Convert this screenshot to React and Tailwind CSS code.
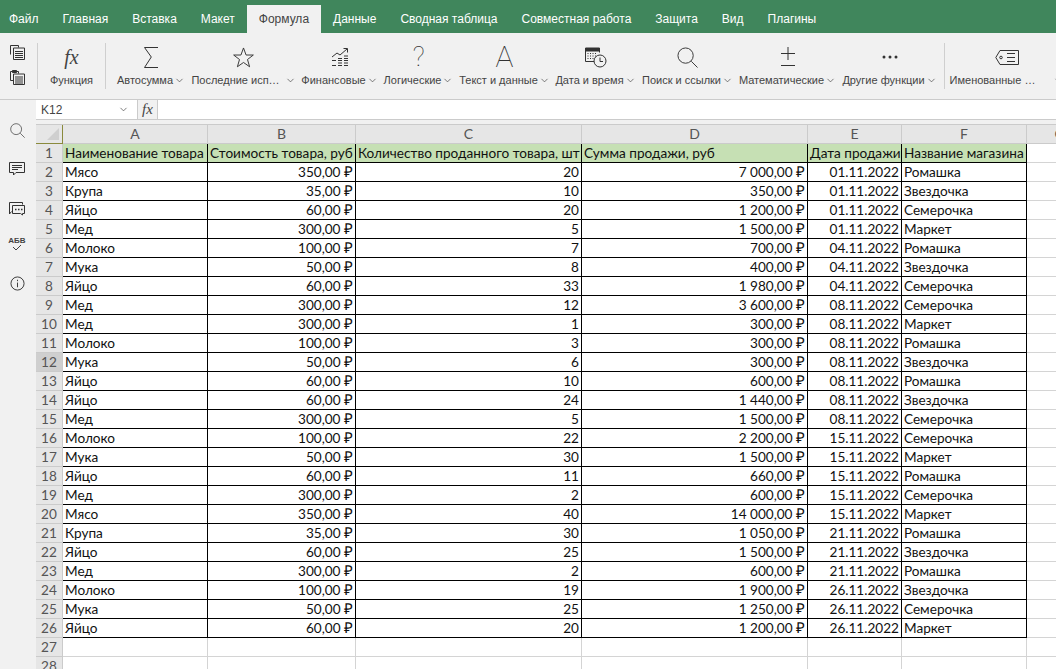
import { ChevronDown } from "lucide-react";

const tabs = ["Файл", "Главная", "Вставка", "Макет", "Формула", "Данные", "Сводная таблица", "Совместная работа", "Защита", "Вид", "Плагины"];

const rows = [
    ["Мясо", "350,00", 20, "7 000,00", "01.11.2022", "Ромашка"],
    ["Крупа", "35,00", 10, "350,00", "01.11.2022", "Звездочка"],
    ["Яйцо", "60,00", 20, "1 200,00", "01.11.2022", "Семерочка"],
    ["Мед", "300,00", 5, "1 500,00", "01.11.2022", "Маркет"],
    ["Молоко", "100,00", 7, "700,00", "04.11.2022", "Ромашка"],
    ["Мука", "50,00", 8, "400,00", "04.11.2022", "Звездочка"],
    ["Яйцо", "60,00", 33, "1 980,00", "04.11.2022", "Семерочка"],
    ["Мед", "300,00", 12, "3 600,00", "08.11.2022", "Семерочка"],
    ["Мед", "300,00", 1, "300,00", "08.11.2022", "Маркет"],
    ["Молоко", "100,00", 3, "300,00", "08.11.2022", "Ромашка"],
    ["Мука", "50,00", 6, "300,00", "08.11.2022", "Звездочка"],
    ["Яйцо", "60,00", 10, "600,00", "08.11.2022", "Ромашка"],
    ["Яйцо", "60,00", 24, "1 440,00", "08.11.2022", "Звездочка"],
    ["Мед", "300,00", 5, "1 500,00", "08.11.2022", "Семерочка"],
    ["Молоко", "100,00", 22, "2 200,00", "15.11.2022", "Семерочка"],
    ["Мука", "50,00", 30, "1 500,00", "15.11.2022", "Маркет"],
    ["Яйцо", "60,00", 11, "660,00", "15.11.2022", "Ромашка"],
    ["Мед", "300,00", 2, "600,00", "15.11.2022", "Семерочка"],
    ["Мясо", "350,00", 40, "14 000,00", "15.11.2022", "Маркет"],
    ["Крупа", "35,00", 30, "1 050,00", "21.11.2022", "Ромашка"],
    ["Яйцо", "60,00", 25, "1 500,00", "21.11.2022", "Звездочка"],
    ["Мед", "300,00", 2, "600,00", "21.11.2022", "Ромашка"],
    ["Молоко", "100,00", 19, "1 900,00", "26.11.2022", "Звездочка"],
    ["Мука", "50,00", 25, "1 250,00", "26.11.2022", "Семерочка"],
    ["Яйцо", "60,00", 20, "1 200,00", "26.11.2022", "Маркет"]
];

const ink = { fill: "none", stroke: "#333", strokeWidth: 1 };

function CopyIcon() {
    return (
        <svg width="15" height="15" viewBox="0 0 15 15" {...ink}>
            <path d="M.5 9.500v-9h8v2" />
            <path d="M3.500 3h11v11.500h-11z" fill="#f1f1f1" />
            <path d="M5 6.500h8M5 8.500h8M5 10.500h8M5 12.500h8" />
        </svg>
    );
}

function PasteIcon() {
    return (
        <svg width="15" height="15" viewBox="0 0 15 15" {...ink}>
            <path d="M3 1.500H.5v9H3M6 1.500h2.500v2" />
            <path d="M2.500.5h4v2h-4z" fill="#333" />
            <path d="M3.500 4h11v10.500h-11z" fill="#f1f1f1" />
            <path d="M5 7h8M5 9h8M5 11h8M5 13h8" />
        </svg>
    );
}

function SumIcon() {
    return (
        <svg width="16" height="21" viewBox="0 0 16 21" {...ink}>
            <path d="M15 .5H1.500l6.800 9.500-6.800 10.500H15" />
        </svg>
    );
}

function StarIcon() {
    return (
        <svg width="21" height="21" viewBox="0 0 22 22" {...ink}>
            <path d="M11 1l2.700 7.400h7.600l-6.100 4.700 2.200 7.600L11 16.200l-6.400 4.500 2.200-7.600L.7 8.400h7.600z" />
        </svg>
    );
}

function FinanceIcon() {
    return (
        <svg width="18" height="20" viewBox="0 0 18 20" {...ink}>
            <path d="M1 10l5-4 3 2 7-6M12.500 1.500h4v4" />
            <path d="M1 13.500h4M1 18.500h4M7 11.500h4M7 13.500h4M7 16h4M7 18.500h4M13 9h4M13 11.500h4M13 13.500h4M13 16h4M13 18.500h4" />
        </svg>
    );
}

function CalendarIcon() {
    return (
        <svg width="22" height="21" viewBox="0 0 22 21" {...ink}>
            <path d="M10 14.500H.5v-12h14v3" />
            <path d="M.5 1h14v3H.5z" fill="#333" />
            <path d="M2.500 6.500h1M5 6.500h1M7.500 6.500h1M10 6.500h1M2.500 9h1M5 9h1M7.500 9h1M10 9h1M2.500 11.500h1M5 11.500h1M7.500 11.500h1" />
            <circle cx="15" cy="14" r="6" fill="#f1f1f1" />
            <path d="M15 10.500v4h3" />
        </svg>
    );
}

function SearchIcon({ size = 21 }) {
    return (
        <svg width={size} height={size} viewBox="0 0 22 22" {...ink}>
            <circle cx="9" cy="9" r="8" />
            <path d="M15 15l6.500 6.500" />
        </svg>
    );
}

function PlusMinusIcon() {
    return (
        <svg width="14" height="20" viewBox="0 0 14 20" {...ink}>
            <path d="M7 0v13M0 6.500h14M0 18.500h14" />
        </svg>
    );
}

function DotsIcon() {
    return (
        <svg width="16" height="4" viewBox="0 0 16 4" fill="#333">
            <circle cx="2" cy="2" r="1.500" />
            <circle cx="8" cy="2" r="1.500" />
            <circle cx="14" cy="2" r="1.500" />
        </svg>
    );
}

function TagIcon() {
    return (
        <svg width="24" height="15" viewBox="0 0 24 15" {...ink}>
            <path d="M5 .5h18.500v14H5L.8 7.500z" />
            <circle cx="6" cy="7.500" r="1.300" />
            <path d="M12 3.500h8M12 7.500h8M12 11.500h8" />
        </svg>
    );
}

function CommentIcon() {
    return (
        <svg width="16" height="16" viewBox="0 0 16 16" {...ink}>
            <path d="M.5 1.500h15v10H7l-2.500 2.500v-2.500h-4z" />
            <path d="M3 4.500h10M3 6.500h10M3 8.500h6" />
        </svg>
    );
}

function ChatIcon() {
    return (
        <svg width="16" height="15" viewBox="0 0 16 15" {...ink}>
            <path d="M2.500 10.500l-2 2.500V1.500h13v2" />
            <path d="M3.500 4.500h12v8h-2v1.500l-2-1.500h-8z" fill="#f1f1f1" />
            <path d="M6 8.500h1.500M9 8.500h1.500M12 8.500h1.500" strokeWidth="1.500" />
        </svg>
    );
}

function InfoIcon() {
    return (
        <svg width="15" height="15" viewBox="0 0 16 16" {...ink}>
            <circle cx="8" cy="8" r="7" />
            <path d="M8 7v5M8 4v1.500" />
        </svg>
    );
}

function FxIcon({ small }) {
    return (
        <span className={`font-['Liberation_Serif',serif] italic text-[#444] leading-none ${small ? "text-[15px]" : "text-[20px]"}`}>
            fx
        </span>
    );
}

function ToolItem({ icon, label, className, chevronGap = "ml-px" }) {
    return (
        <div className={`flex flex-col items-center h-full ${className}`}>
            <div className="h-[30px] flex items-center justify-center">{icon}</div>
            <div className="flex items-center mt-[2px] h-[13px] text-[11px] text-[#444] whitespace-nowrap">
                <span>{label}</span>
                <ChevronDown size={11} strokeWidth={1.500} className={chevronGap} />
            </div>
        </div>
    );
}

function Separator() {
    return <div className="w-px h-[46px] bg-[#cfcfcf] shrink-0" />;
}

function Ruble({ value }) {
    return (
        <span>
            {value} <span className="font-['Liberation_Sans',sans-serif] text-[15px] leading-none">₽</span>
        </span>
    );
}

function Cell({ className, children }) {
    return (
        <div className={`h-[19px] pl-[2px] pr-[2px] leading-[18px] whitespace-nowrap overflow-hidden shrink-0 border-r border-b border-black ${className}`}>
            {children}
        </div>
    );
}

function RowHeader({ n, active }) {
    return (
        <div className={`w-[27px] h-[19px] shrink-0 text-center leading-[18px] text-[#555] border-r border-b border-[#cbcbcb] ${active ? "bg-[#cfcfcf]" : "bg-[#e6e6e6]"}`}>
            {n}
        </div>
    );
}

function ColHeader({ className, children }) {
    return (
        <div className={`h-[19px] shrink-0 text-center leading-[18px] text-[#555] bg-[#e6e6e6] border-r border-b border-[#cbcbcb] ${className}`}>
            {children}
        </div>
    );
}

function EmptyRow({ n }) {
    const cols = ["w-[145px]", "w-[148px]", "w-[226px]", "w-[226px]", "w-[94px]", "w-[125px]", "w-[66px]"];
    return (
        <div className="flex">
            <RowHeader n={n} />
            {cols.map((c, i) => (
                <div key={i} className={`h-[19px] shrink-0 border-r border-b border-[#d4d4d4] ${c}`} />
            ))}
        </div>
    );
}

export default function App() {
    return (
        <div className="w-[1056px] h-[669px] overflow-hidden bg-white font-['Liberation_Sans',sans-serif] flex flex-col">
            <div className="h-[33px] bg-[#40865c] flex items-end shrink-0">
                {tabs.map((t, i) => (
                    <div
                        key={t}
                        className={`h-[28px] flex items-center text-[12px] whitespace-nowrap ${i === 0 ? "pl-[9px] pr-3" : "px-3"} ${t === "Формула" ? "bg-[#f1f1f1] text-[#444]" : "text-white"}`}>
                        {t}
                    </div>
                ))}
            </div>

            <div className="h-[67px] bg-[#f1f1f1] border-b border-[#cbcbcb] shrink-0 flex items-center">
                <div className="w-[37px] h-full flex flex-col items-center justify-center gap-[10px] shrink-0 pb-[2px] pr-[3px]">
                    <CopyIcon />
                    <PasteIcon />
                </div>
                <Separator />
                <div className="w-[67px] h-full pt-[9px] flex flex-col items-center shrink-0">
                    <div className="h-[30px] flex items-center"><FxIcon /></div>
                    <div className="mt-[2px] h-[13px] flex items-center text-[11px] text-[#444]">Функция</div>
                </div>
                <Separator />
                <div className="h-full pt-[9px] pl-[12px] flex shrink-0">
                    <ToolItem icon={<SumIcon />} label="Автосумма" className="w-[66px]" />
                    <ToolItem icon={<StarIcon />} label="Последние исп…" chevronGap="ml-[5px]" className="w-[103px] ml-[8px]" />
                    <ToolItem icon={<FinanceIcon />} label="Финансовые" className="w-[75px] ml-[7px]" />
                    <ToolItem icon={<span className="font-['Roboto',sans-serif] font-thin text-[28px] leading-none text-[#333]">?</span>} label="Логические" className="w-[67px] ml-[8px]" />
                    <ToolItem icon={<span className="font-['Roboto',sans-serif] font-thin text-[30px] leading-none text-[#333]">A</span>} label="Текст и данные" className="w-[87px] ml-[9px]" />
                    <ToolItem icon={<CalendarIcon />} label="Дата и время" className="w-[77px] ml-[9px]" />
                    <ToolItem icon={<SearchIcon />} label="Поиск и ссылки" className="w-[89px] ml-[9px]" />
                    <ToolItem icon={<PlusMinusIcon />} label="Математические" className="w-[95px] ml-[8px]" />
                    <ToolItem icon={<DotsIcon />} label="Другие функции" className="w-[93px] ml-[8px]" />
                </div>
                <div className="ml-[8px]"><Separator /></div>
                <div className="h-full pt-[9px] pl-[12px] shrink-0">
                    <ToolItem icon={<TagIcon />} label="Именованные …" chevronGap="ml-[18px]" className="w-[100px]" />
                </div>
            </div>

            <div className="flex flex-1 min-h-0">
                <div className="w-[36px] shrink-0 bg-[#f1f1f1] flex flex-col items-center pt-[23px] pr-[2px]">
                    <SearchIcon size={15} />
                    <div className="mt-[23px]"><CommentIcon /></div>
                    <div className="mt-[24px]"><ChatIcon /></div>
                    <div className="mt-[20px] h-[16px] flex flex-col items-center text-[#444]">
                        <span className="text-[8px] font-bold leading-[9px]">АБВ</span>
                        <svg width="10" height="6" viewBox="0 0 10 6" fill="none" stroke="#444"><path d="M1 2l3 3 5-5" /></svg>
                    </div>
                    <div className="mt-[24px]"><InfoIcon /></div>
                </div>
                <div className="flex-1 min-w-0 flex flex-col">
                    <div className="h-[20px] shrink-0 flex bg-white border-b border-[#cbcbcb] text-[12px] text-[#444]">
                        <div className="w-[100px] ml-px flex items-center justify-between pl-[4px] pr-[8px] shrink-0">
                            <span>K12</span>
                            <ChevronDown size={11} strokeWidth={1.500} />
                        </div>
                        <div className="w-[21px] bg-[#f1f1f1] border-x border-[#cbcbcb] flex items-center justify-center shrink-0">
                            <FxIcon small />
                        </div>
                    </div>
                    <div className="h-[5px] shrink-0 bg-[#f1f1f1] border-b border-[#cbcbcb]" />
                    <div className="flex-1 min-h-0 overflow-hidden font-['Lato',sans-serif] text-[13.6px] text-[#111]">
                        <div className="flex text-[14px]">
                            <div className="relative w-[27px] h-[19px] shrink-0 bg-[#e6e6e6] border-r border-b border-[#8a8a3c]">
                                <div className="absolute right-[3px] bottom-[3px] w-0 h-0 border-l-[12px] border-b-[12px] border-l-transparent border-b-[#cfcfcf]" />
                            </div>
                            <ColHeader className="w-[145px]">A</ColHeader>
                            <ColHeader className="w-[148px]">B</ColHeader>
                            <ColHeader className="w-[226px]">C</ColHeader>
                            <ColHeader className="w-[226px]">D</ColHeader>
                            <ColHeader className="w-[94px]">E</ColHeader>
                            <ColHeader className="w-[125px]">F</ColHeader>
                            <ColHeader className="w-[66px]">G</ColHeader>
                        </div>
                        <div className="flex">
                            <RowHeader n={1} />
                            <Cell className="w-[145px] bg-[#c6e0b4]">Наименование товара</Cell>
                            <Cell className="w-[148px] bg-[#c6e0b4]">Стоимость товара, руб</Cell>
                            <Cell className="w-[226px] bg-[#c6e0b4]">Количество проданного товара, шт</Cell>
                            <Cell className="w-[226px] bg-[#c6e0b4]">Сумма продажи, руб</Cell>
                            <Cell className="w-[94px] bg-[#c6e0b4]">Дата продажи</Cell>
                            <Cell className="w-[125px] bg-[#c6e0b4]">Название магазина</Cell>
                            <div className="h-[19px] w-[66px] shrink-0 border-r border-b border-[#d4d4d4]" />
                        </div>
                        {rows.map((r, i) => (
                            <div className="flex" key={i}>
                                <RowHeader n={i + 2} active={i + 2 === 12} />
                                <Cell className="w-[145px]">{r[0]}</Cell>
                                <Cell className="w-[148px] text-right"><Ruble value={r[1]} /></Cell>
                                <Cell className="w-[226px] text-right">{r[2]}</Cell>
                                <Cell className="w-[226px] text-right"><Ruble value={r[3]} /></Cell>
                                <Cell className="w-[94px] text-right">{r[4]}</Cell>
                                <Cell className="w-[125px]">{r[5]}</Cell>
                                <div className="h-[19px] w-[66px] shrink-0 border-r border-b border-[#d4d4d4]" />
                            </div>
                        ))}
                        <EmptyRow n={27} />
                        <EmptyRow n={28} />
                    </div>
                </div>
            </div>
        </div>
    );
}
